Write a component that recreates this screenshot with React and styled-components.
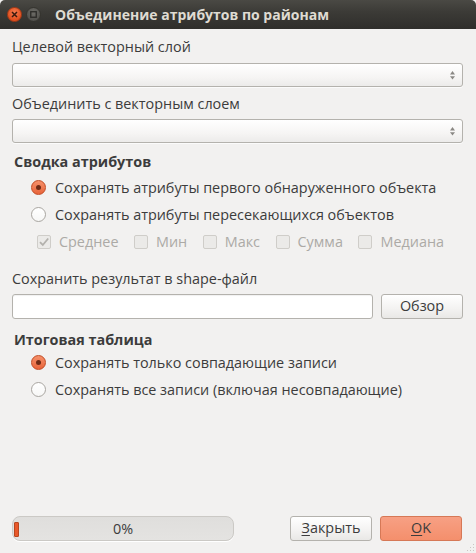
import styled, { createGlobalStyle } from 'styled-components';

const GlobalStyle = createGlobalStyle`
  html, body { margin: 0; padding: 0; background: #f2f1f0; }
  body { font-family: 'Open Sans', 'Noto Sans', sans-serif; }
`;

/* ── Window chrome ─────────────────────────── */
const Window = styled.div`
  width: 476px; height: 553px;
  display: flex; flex-direction: column;
  background: #f2f1f0; color: #3c3c3c;
  font-size: 14.4px; overflow: hidden;
`;
const TitleBar = styled.div`
  height: 29px; flex-shrink: 0;
  display: flex; align-items: center;
  padding-left: 7px;
  background: linear-gradient(#4a4944, #3c3b37 40%, #2f2e2b);
  border-radius: 5px 5px 0 0;
`;
const WinBtn = styled.div`
  width: 15px; height: 15px; border-radius: 50%;
  box-sizing: border-box;
  display: flex; align-items: center; justify-content: center;
  margin-right: 4px;
  background: ${p => p.$close
    ? 'radial-gradient(circle at 50% 35%, #f47a4e, #e2501f 70%, #c9431a)'
    : 'radial-gradient(circle at 50% 35%, #6d6c67, #53524e 70%, #45443f)'};
  border: 1px solid ${p => p.$close ? '#a83a16' : '#35342f'};
`;
const Title = styled.div`
  margin-left: 10px;
  font-weight: 700; font-size: 14px;
  color: #dfdbd2;
`;

/* ── Body ──────────────────────────────────── */
const Body = styled.div`
  flex: 1;
  display: flex; flex-direction: column;
  padding: 9px 13px 12px 12px;
`;
const Label = styled.div`
  height: 18px; line-height: 18px;
  margin-bottom: ${p => p.$mb ?? 7}px;
  margin-top: ${p => p.$mt ?? 0}px;
  white-space: nowrap;
`;
const GroupTitle = styled.div`
  height: 18px; line-height: 18px;
  padding-left: 2px;
  font-weight: 700;
  margin-top: ${p => p.$mt}px;
`;
const Combo = styled.div`
  height: 24px; box-sizing: border-box;
  border: 1px solid #b4b2ad; border-radius: 3px;
  background: linear-gradient(#ffffff, #f6f5f4 60%, #ecebea);
  box-shadow: 0 1px 0 rgba(255,255,255,0.7);
  display: flex; justify-content: flex-end; align-items: center;
  padding-right: 6px;
`;
const Arrows = styled.svg`display: block;`;

const RadioRow = styled.div`
  height: 27px;
  display: flex; align-items: center;
  padding-left: 19px; gap: 9px;
  white-space: nowrap;
`;
const Radio = styled.div`
  width: 15px; height: 15px; border-radius: 50%;
  box-sizing: border-box; flex-shrink: 0;
  display: flex; align-items: center; justify-content: center;
  border: 1px solid ${p => p.$on ? '#c24a22' : '#a9a6a1'};
  background: ${p => p.$on
    ? 'linear-gradient(#f5906a, #e8643a)'
    : 'linear-gradient(#ffffff, #f7f7f6)'};
  &::after {
    content: '';
    display: ${p => p.$on ? 'block' : 'none'};
    width: 5px; height: 5px; border-radius: 50%;
    background: #6e2a15;
  }
`;
const CheckRow = styled.div`
  height: 27px;
  display: flex; align-items: center; justify-content: space-between;
  padding-left: 25px; padding-right: 19px;
`;
const CheckItem = styled.div`
  display: flex; align-items: center; gap: 8px;
  color: #acaaa6; white-space: nowrap;
`;
const Check = styled.div`
  width: 14px; height: 14px; box-sizing: border-box;
  border: 1px solid #cfcdc9; border-radius: 2px;
  background: #ebeae8;
  display: flex; align-items: center; justify-content: center;
`;

const FileRow = styled.div`
  display: flex; gap: 8px;
`;
const LineEdit = styled.div`
  flex: 1; height: 25px; box-sizing: border-box;
  border: 1px solid #b4b2ad; border-radius: 3px;
  background: #ffffff;
  box-shadow: inset 0 1px 1px rgba(0,0,0,0.06);
`;
const Button = styled.div`
  width: 82px; height: 25px; box-sizing: border-box;
  border: 1px solid ${p => p.$primary ? '#d67856' : '#b4b2ad'};
  border-radius: 3px;
  background: ${p => p.$primary
    ? 'linear-gradient(#f7a084, #f48f6c)'
    : 'linear-gradient(#ffffff, #f3f2f1 60%, #e9e8e6)'};
  display: flex; align-items: center; justify-content: center;
  line-height: 1; color: #3c3c3c;
  u { text-decoration-thickness: 1px; text-underline-offset: 2px; }
`;

const Spacer = styled.div`flex: 1;`;

const BottomRow = styled.div`
  display: flex; align-items: center; gap: 8px;
`;
const Progress = styled.div`
  width: 222px; height: 25px; box-sizing: border-box;
  border: 1px solid #cbc9c5; border-radius: 8px;
  background: linear-gradient(#dfdedc, #e4e3e1);
  box-shadow: 0 1px 0 #ffffff;
  position: relative;
  display: flex; align-items: center; justify-content: center;
  margin-right: 48px;
`;
const Chunk = styled.div`
  position: absolute; left: 1px; top: 5px;
  width: 3px; height: 13px;
  background: #e8582a; border: 1px solid #b8461f; border-radius: 1px;
`;
const Grip = styled.svg`
  position: absolute; right: 1px; bottom: 1px;
`;
const Frame = styled.div`position: relative;`;

const ComboArrows = () => (
  <Arrows width="7" height="14" viewBox="0 0 7 14">
    <path d="M3.5 3 L6 6.5 L1 6.5 Z" fill="#8a8884" />
    <path d="M3.5 11 L6 7.8 L1 7.8 Z" fill="#8a8884" transform="translate(0 0.5)" />
  </Arrows>
);

const Tick = () => (
  <svg width="12" height="12" viewBox="0 0 12 12">
    <path d="M2 6.2 L4.8 9 L10.2 2.5" fill="none" stroke="#b3b1ad" strokeWidth="1.8" />
  </svg>
);

const CHECKS = ['Среднее', 'Мин', 'Макс', 'Сумма', 'Медиана'];

export default function App() {
  return (
    <Frame>
      <GlobalStyle />
      <Window>
        <TitleBar>
          <WinBtn $close>
            <svg width="7" height="7" viewBox="0 0 7 7">
              <path d="M1 1 L6 6 M6 1 L1 6" stroke="#3a1a0e" strokeWidth="1.5" />
            </svg>
          </WinBtn>
          <WinBtn>
            <svg width="7" height="7" viewBox="0 0 7 7">
              <rect x="0.75" y="0.75" width="5.5" height="5.5" fill="none" stroke="#2b2a27" strokeWidth="1.3" />
            </svg>
          </WinBtn>
          <Title>Объединение атрибутов по районам</Title>
        </TitleBar>
        <Body>
          <Label>Целевой векторный слой</Label>
          <Combo><ComboArrows /></Combo>
          <Label $mt={8} $mb={6}>Объединить с векторным слоем</Label>
          <Combo><ComboArrows /></Combo>

          <GroupTitle $mt={10}>Сводка атрибутов</GroupTitle>
          <RadioRow style={{ marginTop: 3 }}>
            <Radio $on />Сохранять атрибуты первого обнаруженного объекта
          </RadioRow>
          <RadioRow>
            <Radio />Сохранять атрибуты пересекающихся объектов
          </RadioRow>
          <CheckRow>
            {CHECKS.map((c, i) => (
              <CheckItem key={c}>
                <Check>{i === 0 && <Tick />}</Check>{c}
              </CheckItem>
            ))}
          </CheckRow>

          <Label $mt={15} $mb={6}>Сохранить результат в shape-файл</Label>
          <FileRow>
            <LineEdit />
            <Button>Обзор</Button>
          </FileRow>

          <GroupTitle $mt={12}>Итоговая таблица</GroupTitle>
          <RadioRow>
            <Radio $on />Сохранять только совпадающие записи
          </RadioRow>
          <RadioRow>
            <Radio />Сохранять все записи (включая несовпадающие)
          </RadioRow>

          <Spacer />
          <BottomRow>
            <Progress><Chunk />0%</Progress>
            <Button><span><u>З</u>акрыть</span></Button>
            <Button $primary><span><u>O</u>K</span></Button>
          </BottomRow>
        </Body>
      </Window>
      <Grip width="10" height="10" viewBox="0 0 10 10">
        {[[8, 2], [8, 5], [5, 5], [8, 8], [5, 8], [2, 8]].map(([x, y], i) => (
          <rect key={i} x={x} y={y} width="1" height="1" fill="#c9c7c3" />
        ))}
      </Grip>
    </Frame>
  );
}
